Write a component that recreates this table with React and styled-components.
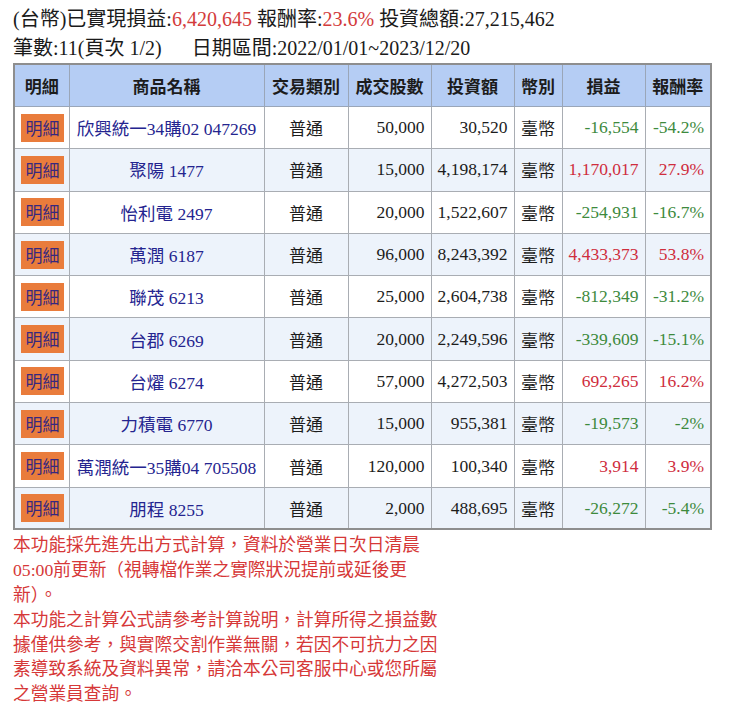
import styled, { createGlobalStyle } from "styled-components"

const Global = createGlobalStyle`
    body {
        margin: 0;
        background: #fff;
        font-family: "Liberation Serif", "Noto Sans CJK TC", serif;
    }
`

const Page = styled.div`
    padding: 5px 13px 0;
    width: 714px;
`

const Summary = styled.div`
    font-size: 20px;
    line-height: 29px;
    color: #1a1a1a;
    white-space: pre;

    .red {
        color: #d33b3b;
    }
`

const Table = styled.table`
    width: 697px;
    table-layout: fixed;
    border-collapse: collapse;
    border: 2px solid #8e8e8e;
    font-size: 17.5px;
`

const Th = styled.th`
    height: 41px;
    padding: 0;
    background-color: #b5cdf4;
    border: 1px solid #9aa6b8;
    font-family: "Noto Sans CJK TC", sans-serif;
    font-weight: 700;
    font-size: 17px;
    color: #1c1c1c;
    text-align: center;
`

const Row = styled.tr`
    height: 42.3px;
    background-color: ${(props) => (props.$alt ? "#edf3fb" : "#ffffff")};
`

const Td = styled.td`
    padding: 0 6px;
    border: 1px solid #a9adb3;
    text-align: ${(props) => props.$align || "center"};
    color: ${(props) => props.$color || "#1c1c1c"};
    white-space: nowrap;
    overflow: hidden;
`

const DetailBtn = styled.span`
    display: inline-block;
    width: 43px;
    height: 28px;
    line-height: 28px;
    background-color: #e97c3c;
    color: #36287f;
    font-family: "Noto Sans CJK TC", sans-serif;
    font-size: 17px;
    text-align: center;
`

const Name = styled.span`
    color: #24248f;
`

const Kind = styled.span`
    font-family: "Noto Sans CJK TC", sans-serif;
    font-size: 17px;
`

const Notes = styled.div`
    width: 432px;
    margin-top: 3px;
    font-size: 17.7px;
    line-height: 24.8px;
    color: #d63838;
`

const GREEN = "#3d8a3d"
const RED = "#cf2d3d"

const rows = [
    ["欣興統一34購02 047269", "50,000", "30,520", "-16,554", "-54.2%"],
    ["聚陽 1477", "15,000", "4,198,174", "1,170,017", "27.9%"],
    ["怡利電 2497", "20,000", "1,522,607", "-254,931", "-16.7%"],
    ["萬潤 6187", "96,000", "8,243,392", "4,433,373", "53.8%"],
    ["聯茂 6213", "25,000", "2,604,738", "-812,349", "-31.2%"],
    ["台郡 6269", "20,000", "2,249,596", "-339,609", "-15.1%"],
    ["台燿 6274", "57,000", "4,272,503", "692,265", "16.2%"],
    ["力積電 6770", "15,000", "955,381", "-19,573", "-2%"],
    ["萬潤統一35購04 705508", "120,000", "100,340", "3,914", "3.9%"],
    ["朋程 8255", "2,000", "488,695", "-26,272", "-5.4%"],
]

const widths = [55, 195, 84, 83, 83, 48, 83, 66]
const heads = ["明細", "商品名稱", "交易類別", "成交股數", "投資額", "幣別", "損益", "報酬率"]

function App() {
    return (
        <Page lang="zh-TW">
            <Global />
            <Summary>
                (台幣)已實現損益:<span className="red">6,420,645</span> 報酬率:<span className="red">23.6%</span> 投資總額:27,215,462
            </Summary>
            <Summary>筆數:11(頁次 1/2)      日期區間:2022/01/01~2023/12/20</Summary>
            <Table>
                <colgroup>
                    {widths.map((w, i) => (
                        <col key={i} style={{ width: w }} />
                    ))}
                </colgroup>
                <thead>
                    <tr>
                        {heads.map((h) => (
                            <Th key={h}>{h}</Th>
                        ))}
                    </tr>
                </thead>
                <tbody>
                    {rows.map((r, i) => {
                        const color = r[3].startsWith("-") ? GREEN : RED
                        return (
                            <Row key={i} $alt={i % 2 === 1}>
                                <Td>
                                    <DetailBtn>明細</DetailBtn>
                                </Td>
                                <Td>
                                    <Name>{r[0]}</Name>
                                </Td>
                                <Td>
                                    <Kind>普通</Kind>
                                </Td>
                                <Td $align="right">{r[1]}</Td>
                                <Td $align="right">{r[2]}</Td>
                                <Td>
                                    <Kind>臺幣</Kind>
                                </Td>
                                <Td $align="right" $color={color}>{r[3]}</Td>
                                <Td $align="right" $color={color}>{r[4]}</Td>
                            </Row>
                        )
                    })}
                </tbody>
            </Table>
            <Notes>
                本功能採先進先出方式計算，資料於營業日次日清晨05:00前更新（視轉檔作業之實際狀況提前或延後更新）。
                <br />
                本功能之計算公式請參考計算說明，計算所得之損益數據僅供參考，與實際交割作業無關，若因不可抗力之因素導致系統及資料異常，請洽本公司客服中心或您所屬之營業員查詢。
            </Notes>
        </Page>
    )
}

export default App
